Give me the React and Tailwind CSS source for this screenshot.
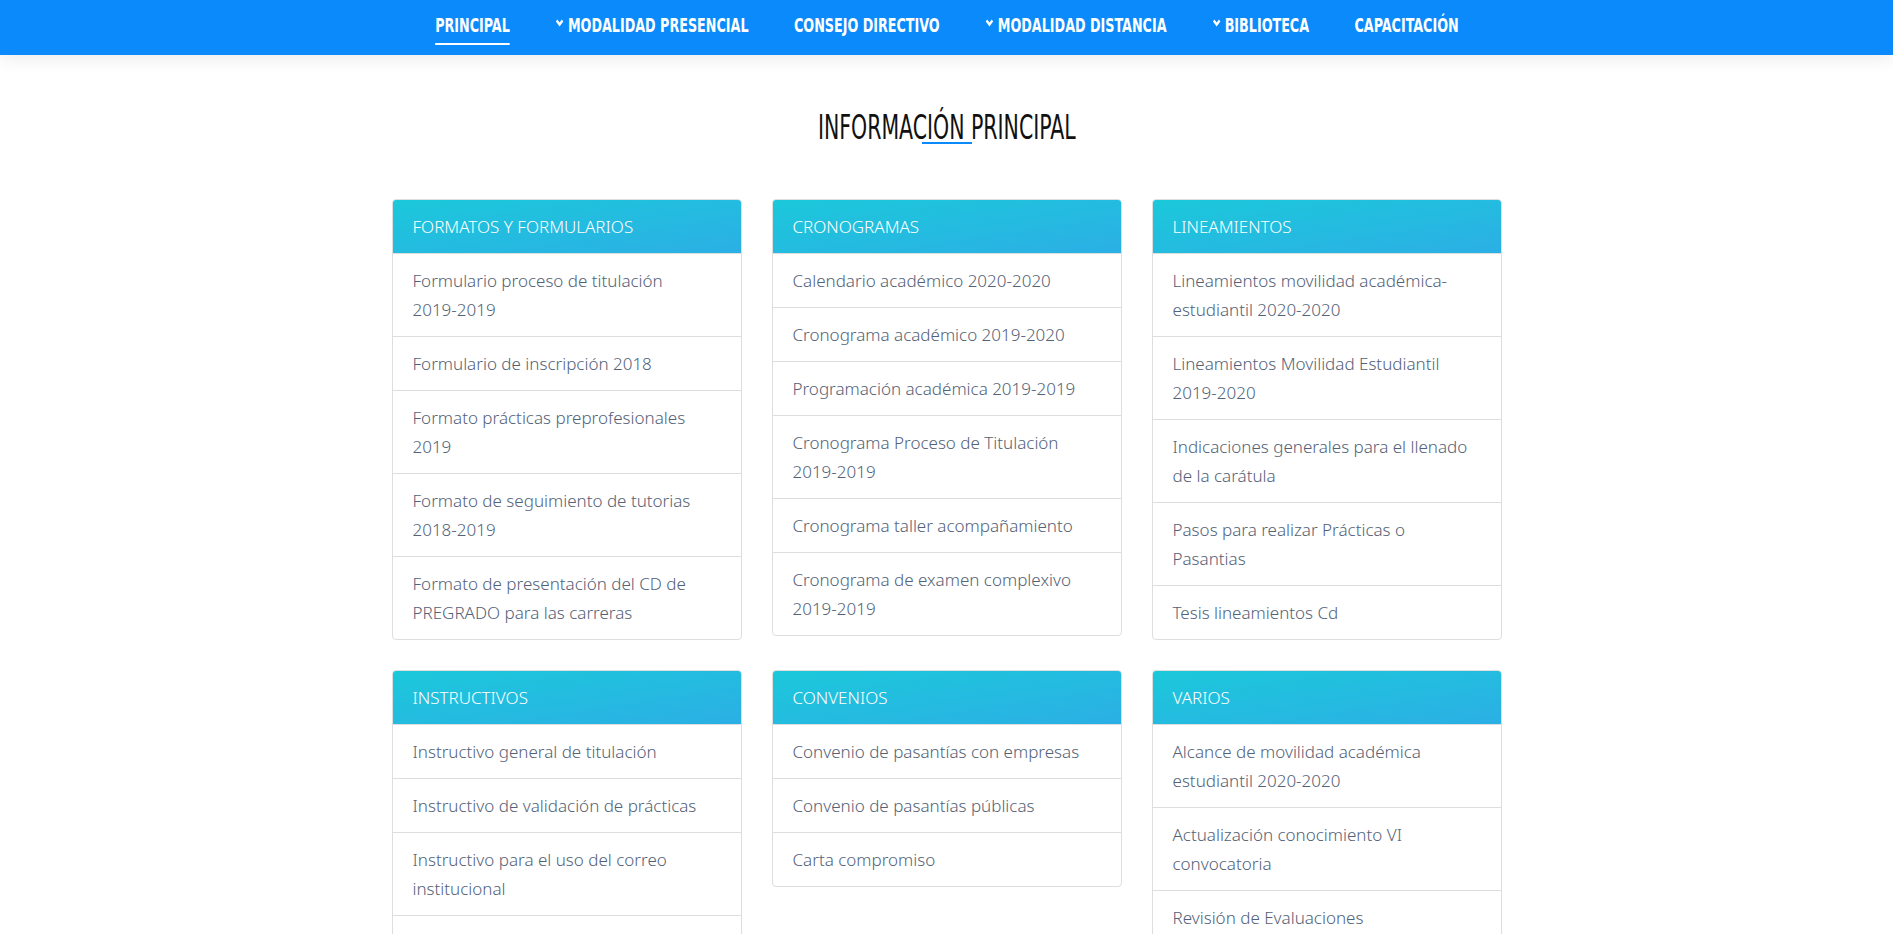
import React from 'react';

const navItems = [
    { label: 'PRINCIPAL', active: true },
    { label: 'MODALIDAD PRESENCIAL', drop: true },
    { label: 'CONSEJO DIRECTIVO' },
    { label: 'MODALIDAD DISTANCIA', drop: true },
    { label: 'BIBLIOTECA', drop: true },
    { label: 'CAPACITACIÓN' },
];

// each item is a list of lines, as they wrap on the page
const cards = [
    {
        title: 'FORMATOS Y FORMULARIOS',
        items: [
            ['Formulario proceso de titulación', '2019-2019'],
            ['Formulario de inscripción 2018'],
            ['Formato prácticas preprofesionales', '2019'],
            ['Formato de seguimiento de tutorias', '2018-2019'],
            ['Formato de presentación del CD de', 'PREGRADO para las carreras'],
        ],
    },
    {
        title: 'CRONOGRAMAS',
        items: [
            ['Calendario académico 2020-2020'],
            ['Cronograma académico 2019-2020'],
            ['Programación académica 2019-2019'],
            ['Cronograma Proceso de Titulación', '2019-2019'],
            ['Cronograma taller acompañamiento'],
            ['Cronograma de examen complexivo', '2019-2019'],
        ],
    },
    {
        title: 'LINEAMIENTOS',
        items: [
            ['Lineamientos movilidad académica-', 'estudiantil 2020-2020'],
            ['Lineamientos Movilidad Estudiantil', '2019-2020'],
            ['Indicaciones generales para el llenado', 'de la carátula'],
            ['Pasos para realizar Prácticas o', 'Pasantias'],
            ['Tesis lineamientos Cd'],
        ],
    },
    {
        title: 'INSTRUCTIVOS',
        items: [
            ['Instructivo general de titulación'],
            ['Instructivo de validación de prácticas'],
            ['Instructivo para el uso del correo', 'institucional'],
            ['Instructivo de matrícula'],
        ],
    },
    {
        title: 'CONVENIOS',
        items: [
            ['Convenio de pasantías con empresas'],
            ['Convenio de pasantías públicas'],
            ['Carta compromiso'],
        ],
    },
    {
        title: 'VARIOS',
        items: [
            ['Alcance de movilidad académica', 'estudiantil 2020-2020'],
            ['Actualización conocimiento VI', 'convocatoria'],
            ['Revisión de Evaluaciones'],
            ['Reglamento de régimen académico'],
        ],
    },
];

const Chevron = () => (
    <svg width="12" height="8" viewBox="0 0 12 8" className="mr-[5px] mt-[-4px]">
        <polyline points="2,1.6 6,5.6 10,1.6" fill="none" stroke="white" strokeWidth="2.8" />
    </svg>
);

const App = () => {
    return (
        <div className="min-h-screen bg-white font-['Noto_Sans',sans-serif]">
            {/* Navbar */}
            <nav className="relative z-10 flex h-[55px] justify-center bg-[#0b8bfb] shadow-[0_4px_18px_rgba(0,0,0,0.08)]">
                <ul className="mt-[-3px] flex h-full scale-x-[0.745] items-center gap-[61px] font-['DejaVu_Sans_Condensed',sans-serif] text-[19px] font-bold leading-[20px] text-white">
                    {navItems.map((n) => (
                        <li key={n.label} className="relative flex items-center whitespace-nowrap">
                            {n.drop && <Chevron />}
                            <span>{n.label}</span>
                            {n.active && <span className="absolute left-0 right-0 top-[28px] h-[2px] bg-white" />}
                        </li>
                    ))}
                </ul>
            </nav>

            {/* Heading */}
            <div className="pt-[53px] pb-[55px] text-center">
                <h2 className="inline-block scale-x-[0.69] whitespace-nowrap font-['DejaVu_Sans_Condensed',sans-serif] text-[33px] font-normal leading-[40px] text-[#111]">
                    INFORMACIÓN PRINCIPAL
                </h2>
                <div className="mx-auto mt-[-6px] h-[2px] w-[50px] bg-[#0b8bfb]" />
            </div>

            {/* Cards */}
            <div className="mx-auto w-[1140px] px-[15px]">
                <div className="grid grid-cols-3 items-start gap-[30px]">
                    {cards.map((c) => (
                        <div key={c.title} className="overflow-hidden rounded-[4px] border border-[#dedede] bg-white">
                            <div className="bg-gradient-to-br from-[#1bc8da] to-[#2bafe5] px-[20px] py-[12px] text-[17px] font-light leading-[29px] text-white">
                                {c.title}
                            </div>
                            <ul>
                                {c.items.map((lines) => (
                                    <li key={lines[0]} className="border-t border-[#dedede] px-[20px] py-[12px] text-[17px] font-light leading-[29px] text-[#536277] whitespace-nowrap">
                                        {lines.map((l, i) => (
                                            <div key={i}>{l}</div>
                                        ))}
                                    </li>
                                ))}
                            </ul>
                        </div>
                    ))}
                </div>
            </div>
        </div>
    );
};

export default App;
